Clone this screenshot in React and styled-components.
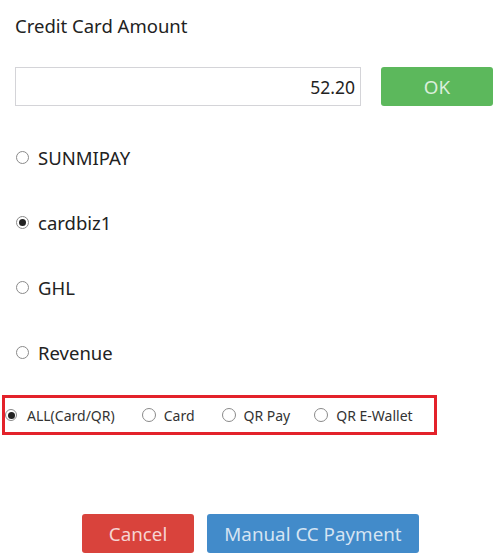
import React, {useState} from 'react';
import styled, {createGlobalStyle} from 'styled-components';

const GlobalStyle = createGlobalStyle`
    body{
        margin : 0;
        background : #ffffff;
        font-family : "Noto Sans", "Open Sans", sans-serif;
        color : #222222;
    }
`;

const Page = styled.div`
    width : 496px;
    height : 555px;
    display : flex;
    flex-direction : column;
`;

const Title = styled.div`
    margin : 14px 0px 0px 15px;
    font-size : 18.5px;
    line-height : 24px;
`;

const AmountRow = styled.div`
    display : flex;
    align-items : center;
    gap : 20px;
    margin : 29px 0px 0px 15px;
`;

const AmountInput = styled.input`
    box-sizing : border-box;
    width : 346px;
    height : 39px;
    border : 1px solid #d4d4d8;
    padding : 0px 5px;
    text-align : right;
    font-family : inherit;
    font-size : 17.5px;
    color : #222222;
    outline : none;
`;

const Button = styled.button`
    box-sizing : border-box;
    height : 39px;
    width : ${props => props.width}px;
    border : none;
    border-radius : 3px;
    background : ${props => props.bg};
    color : rgba(255,255,255,0.78);
    font-family : inherit;
    font-size : 18.8px;
    padding : 0px;
`;

const ProviderList = styled.div`
    display : flex;
    flex-direction : column;
    gap : 41px;
    margin : 39px 0px 0px 16px;
`;

const RadioRow = styled.label`
    display : flex;
    align-items : center;
    gap : ${props => props.gap || 9}px;
    height : 24px;
    font-size : ${props => props.size || 18.5}px;
    color : ${props => props.size ? '#333333' : '#222222'};
    cursor : pointer;
`;

const Circle = styled.span`
    box-sizing : border-box;
    width : ${props => props.d || 13}px;
    height : ${props => props.d || 13}px;
    border-radius : 50%;
    border : 1px solid #8a8a8a;
    display : flex;
    align-items : center;
    justify-content : center;
    flex-shrink : 0;
    &::after{
        content : "";
        width : 7px;
        height : 7px;
        border-radius : 50%;
        background : ${props => props.on ? '#222222' : 'transparent'};
    }
`;

const ModeBox = styled.div`
    box-sizing : border-box;
    width : 435px;
    height : 40px;
    margin : 31px 0px 0px 2px;
    border : 3px solid #e3222a;
    display : flex;
    align-items : center;
    padding-left : 0px;
`;

const ModeItem = styled.div`
    margin-right : ${props => props.mr}px;
`;

const Footer = styled.div`
    display : flex;
    gap : 13px;
    margin : 79px 0px 0px 82px;
`;

const providers = ['SUNMIPAY', 'cardbiz1', 'GHL', 'Revenue'];
const modes = [
    {name : 'ALL(Card/QR)', mr : 27},
    {name : 'Card', mr : 27},
    {name : 'QR Pay', mr : 24},
    {name : 'QR E-Wallet', mr : 0},
];

function App(){
    const [provider, setProvider] = useState('cardbiz1');
    const [mode, setMode] = useState('ALL(Card/QR)');

    return(
        <Page>
            <GlobalStyle/>
            <Title>Credit Card Amount</Title>
            <AmountRow>
                <AmountInput defaultValue="52.20"/>
                <Button width={112} bg="#5cb85c">OK</Button>
            </AmountRow>
            <ProviderList>
                {providers.map(p =>
                    <RadioRow key={p} onClick={() => setProvider(p)}>
                        <Circle on={provider === p ? 1 : 0}/>
                        {p}
                    </RadioRow>
                )}
            </ProviderList>
            <ModeBox>
                {modes.map((m, i) =>
                    <ModeItem key={m.name} mr={m.mr}>
                        <RadioRow size={14} gap={i === 0 ? 10 : 8} onClick={() => setMode(m.name)}>
                            <Circle d={i === 0 ? 12 : 14} on={mode === m.name ? 1 : 0}/>
                            {m.name}
                        </RadioRow>
                    </ModeItem>
                )}
            </ModeBox>
            <Footer>
                <Button width={112} bg="#d9433c">Cancel</Button>
                <Button width={212} bg="#428bca">Manual CC Payment</Button>
            </Footer>
        </Page>
    )
}

export default App;
